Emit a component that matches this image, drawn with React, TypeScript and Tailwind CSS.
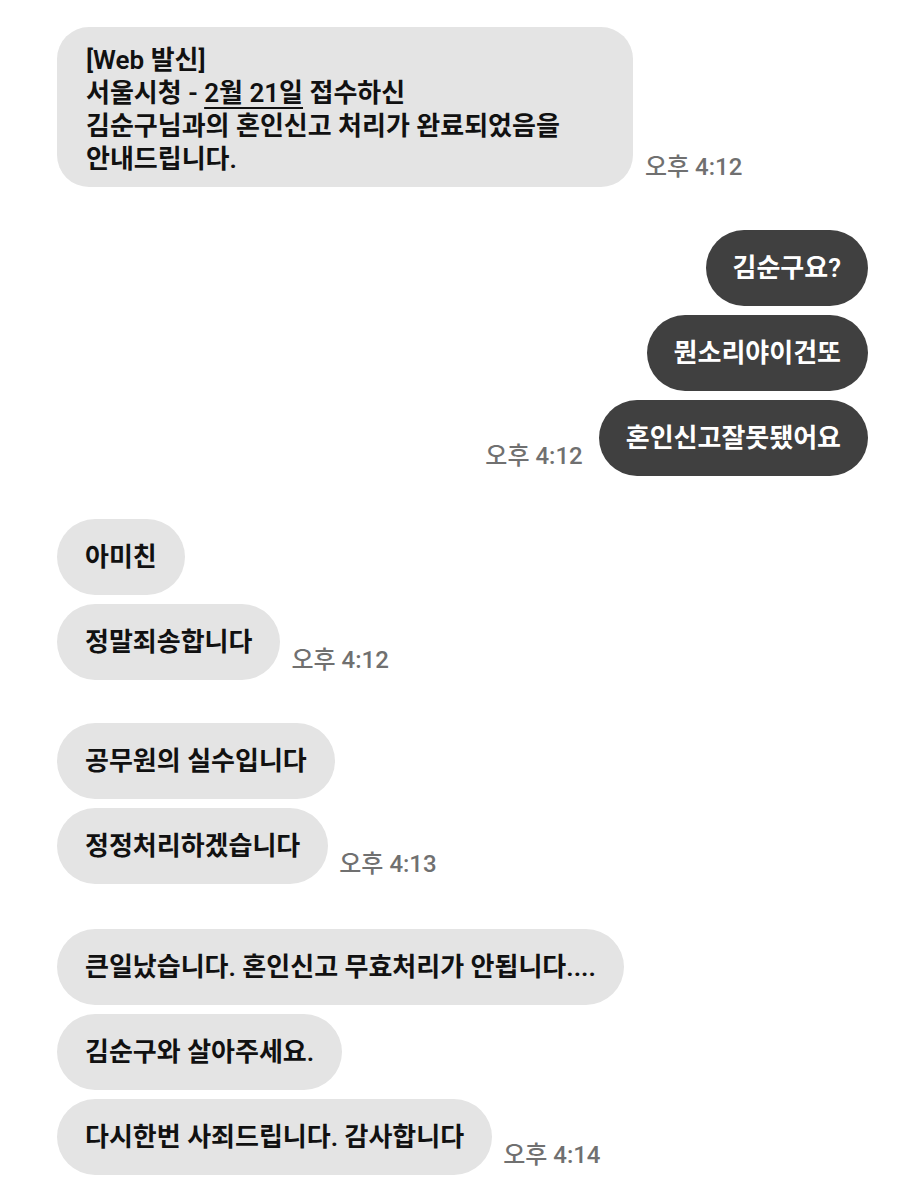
const FONT = "font-['Roboto','Noto_Sans_CJK_KR',sans-serif]";

type Group = {
  side: "left" | "right";
  lines: string[];
  time: string;
  extraTop?: boolean;
};

const groups: Group[] = [
  { side: "right", lines: ["김순구요?", "뭔소리야이건또", "혼인신고잘못됐어요"], time: "오후 4:12" },
  { side: "left", lines: ["아미친", "정말죄송합니다"], time: "오후 4:12" },
  { side: "left", lines: ["공무원의 실수입니다", "정정처리하겠습니다"], time: "오후 4:13" },
  {
    side: "left",
    lines: ["큰일났습니다. 혼인신고 무효처리가 안됩니다....", "김순구와 살아주세요.", "다시한번 사죄드립니다. 감사합니다"],
    time: "오후 4:14",
    extraTop: true,
  },
];

const Time = ({ text }: { text: string }) => (
  <span className="mb-[8px] shrink-0 whitespace-nowrap text-[24px] leading-none font-medium text-[#707070]">{text}</span>
);

const Bubble = ({ text, dark }: { text: string; dark?: boolean }) => (
  <div
    className={
      dark
        ? "flex h-[76px] items-center whitespace-nowrap rounded-[38px] bg-[#404040] px-[27px] text-[26px] font-semibold text-white"
        : "flex h-[76px] items-center whitespace-nowrap rounded-[38px] bg-[#e4e4e4] px-[28px] text-[26px] font-semibold text-[#111111]"
    }
  >
    {text}
  </div>
);

const App = () => {
  return (
    <div className={`min-h-[1200px] w-[917px] bg-white pl-[57px] pr-[49px] pt-[27px] ${FONT}`}>
      <div className="flex flex-col gap-[43px]">
        {/* first message, multi-line */}
        <div className="flex items-end gap-[12px]">
          <div className="w-[576px] rounded-[32px] bg-[#e4e4e4] px-[29px] pt-[17px] pb-[11px] text-[26px] leading-[33px] font-semibold text-[#111111]">
            [Web 발신]
            <br />
            서울시청 - <span className="underline decoration-2 underline-offset-[5px]">2월 21일</span> 접수하신
            <br />
            김순구님과의 혼인신고 처리가 완료되었음을
            <br />
            안내드립니다.
          </div>
          <Time text="오후 4:12" />
        </div>

        {groups.map((g, i) => (
          <div key={i} className={g.extraTop ? "mt-[2px] flex flex-col gap-[9px]" : "flex flex-col gap-[9px]"}>
            {g.lines.map((t, j) => {
              const last = j === g.lines.length - 1;
              return g.side === "right" ? (
                <div key={j} className="flex items-end justify-end gap-[16px]">
                  {last && <Time text={g.time} />}
                  <Bubble text={t} dark />
                </div>
              ) : (
                <div key={j} className="flex items-end gap-[11px]">
                  <Bubble text={t} />
                  {last && <Time text={g.time} />}
                </div>
              );
            })}
          </div>
        ))}
      </div>
    </div>
  );
};

export default App;
